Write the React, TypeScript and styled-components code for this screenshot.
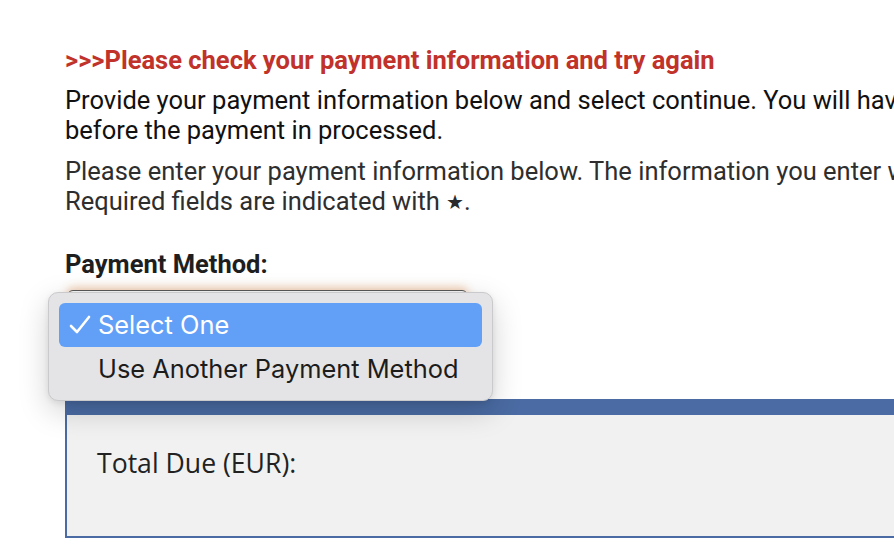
import styled, { createGlobalStyle } from 'styled-components';

const GlobalStyle = createGlobalStyle`
  html, body {
    margin: 0;
    padding: 0;
    background: #fff;
    overflow: hidden;
  }
  body {
    font-family: Roboto, 'Noto Sans', sans-serif;
  }
`;

const Page = styled.div`
  width: 894px;
  height: 556px;
  overflow: hidden;
  padding: 45px 0 0 65px;
  box-sizing: border-box;
`;

const ErrorTitle = styled.h2`
  margin: 0 0 10px;
  font-size: 25.5px;
  line-height: 30px;
  font-weight: 700;
  color: #c0322a;
  white-space: nowrap;
`;

const Text = styled.p<{ $muted?: boolean }>`
  margin: 0 0 11px;
  font-size: 25.5px;
  line-height: 30px;
  color: ${(p) => (p.$muted ? '#2e2e2e' : '#111')};
  white-space: nowrap;
`;

const Star = styled.span`
  font-size: 20px;
  color: #2a2a2a;
  margin-left: 6px;
  vertical-align: 1px;
`;

const Label = styled.div`
  margin-top: 32px;
  font-size: 25.5px;
  line-height: 30px;
  font-weight: 700;
  color: #1e1e1e;
`;

const SelectWrap = styled.div`
  position: relative;
  margin: 11px 0 73px 2px;
  width: 401px;
  height: 36px;
`;

const SelectBox = styled.div`
  width: 100%;
  height: 100%;
  box-sizing: border-box;
  border: 1px solid #5a5a5a;
  border-radius: 6px;
  background: #fafafa;
  box-shadow: 0 -3px 8px rgba(226, 150, 90, 0.45);
`;

const Popup = styled.div`
  position: absolute;
  left: -19px;
  top: 2px;
  width: 445px;
  height: 109px;
  box-sizing: border-box;
  padding: 10px 10px;
  background: #e4e4e6;
  border: 1px solid #cacacc;
  border-radius: 10px;
  box-shadow: 0 10px 30px rgba(0, 0, 0, 0.18), 0 2px 6px rgba(0, 0, 0, 0.08);
  z-index: 10;
  display: flex;
  flex-direction: column;
`;

const Option = styled.div<{ $active?: boolean }>`
  height: 44px;
  display: flex;
  align-items: center;
  padding-left: 10px;
  border-radius: 6px;
  font-family: Inter, 'Liberation Sans', sans-serif;
  font-size: 25.4px;
  background: ${(p) => (p.$active ? '#62a0f8' : 'transparent')};
  color: ${(p) => (p.$active ? '#fff' : '#1c1c1c')};
`;

const Check = styled.span`
  width: 29px;
  display: inline-flex;
  align-items: center;
  svg {
    display: block;
  }
`;

const TotalBox = styled.div`
  width: 1000px;
  height: 139px;
  box-sizing: border-box;
  border-top: 16px solid #4a6ba3;
  border-left: 2px solid #4a6ba3;
  border-bottom: 2px solid #4a6ba3;
  background: #f1f1f1;
  padding: 33px 0 0 30px;
`;

const TotalLabel = styled.div`
  font-family: 'Open Sans', 'Noto Sans', sans-serif;
  font-size: 26.6px;
  line-height: 30px;
  color: #222;
`;

export default function App() {
  return (
    <>
      <GlobalStyle />
      <Page>
        <ErrorTitle>&gt;&gt;&gt;Please check your payment information and try again</ErrorTitle>
        <Text>
          Provide your payment information below and select continue. You will have the opportunity to review
          <br />
          before the payment in processed.
        </Text>
        <Text $muted>
          Please enter your payment information below. The information you enter will be kept secure.
          <br />
          Required fields are indicated with<Star>★</Star>.
        </Text>
        <Label>Payment Method:</Label>
        <SelectWrap>
          <SelectBox />
          <Popup>
            <Option $active>
              <Check>
                <svg width="22" height="20" viewBox="0 0 22 20">
                  <path d="M2 11 L8 17 L20 2" fill="none" stroke="#fff" strokeWidth="2.6" strokeLinecap="round" strokeLinejoin="round" />
                </svg>
              </Check>
              Select One
            </Option>
            <Option>
              <Check />Use Another Payment Method
            </Option>
          </Popup>
        </SelectWrap>
        <TotalBox>
          <TotalLabel>Total Due (EUR):</TotalLabel>
        </TotalBox>
      </Page>
    </>
  );
}
